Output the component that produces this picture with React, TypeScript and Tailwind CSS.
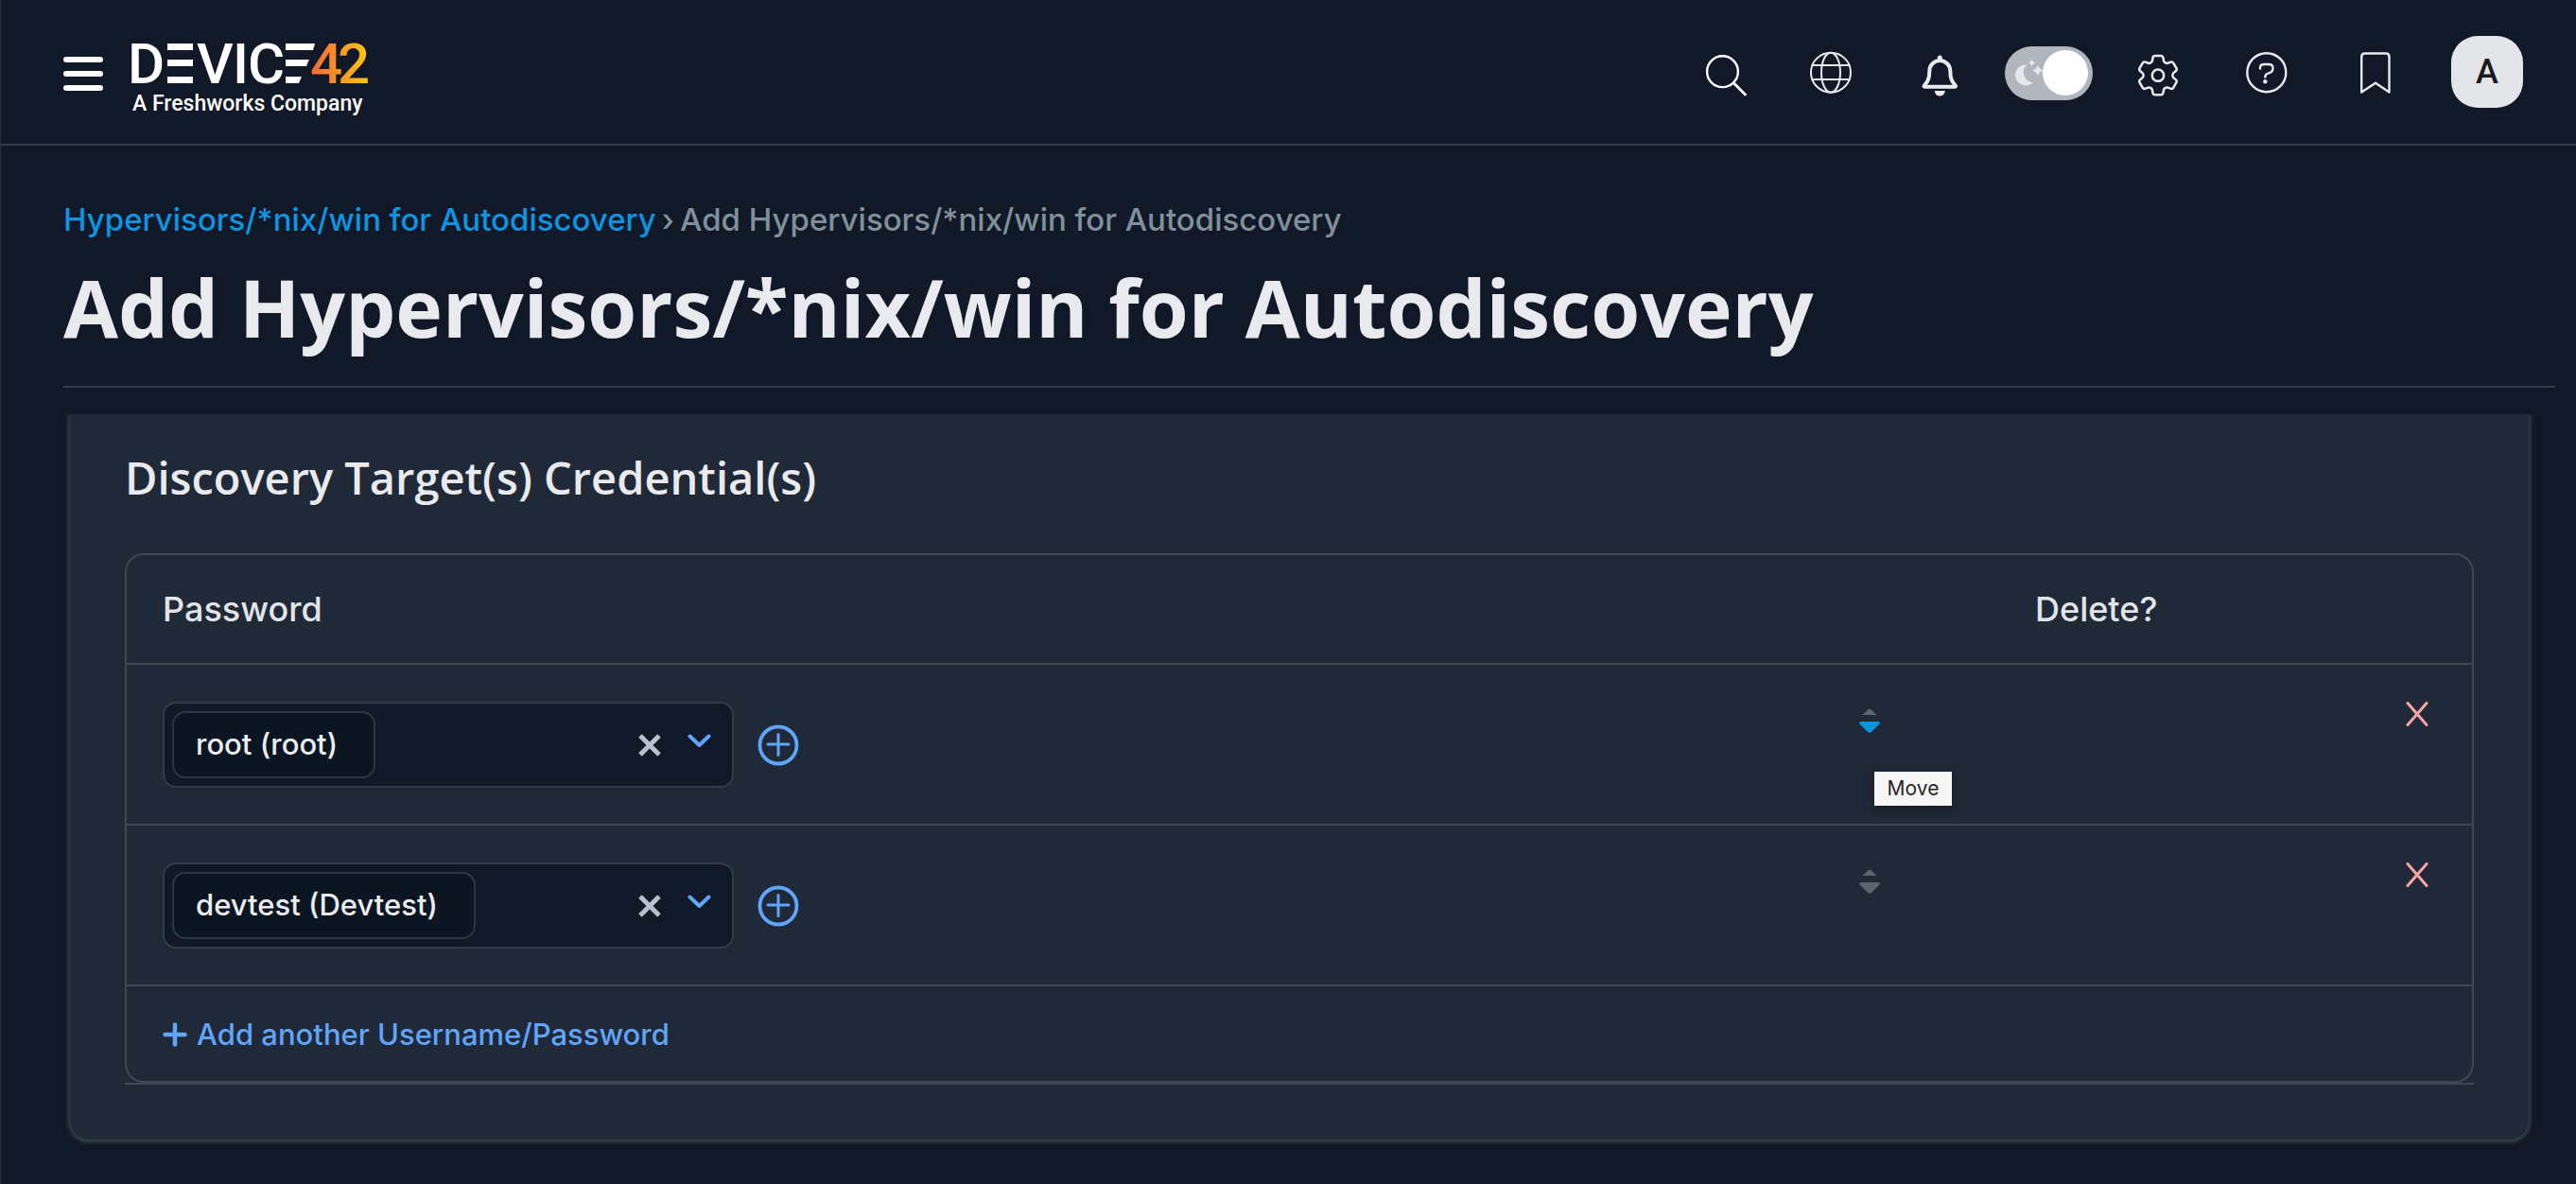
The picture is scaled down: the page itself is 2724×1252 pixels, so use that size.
import type { ReactNode } from "react";

type Credential = { id: string; label: string; moveActive: boolean };

const credentials: Credential[] = [
  { id: "root", label: "root (root)", moveActive: true },
  { id: "devtest", label: "devtest (Devtest)", moveActive: false },
];

const COG =
  "M9.594 3.94c.09-.542.56-.94 1.11-.94h2.593c.55 0 1.02.398 1.11.94l.213 1.281c.063.374.313.686.645.87.074.04.147.083.22.127.325.196.72.257 1.075.124l1.217-.456a1.125 1.125 0 0 1 1.37.49l1.296 2.247a1.125 1.125 0 0 1-.26 1.431l-1.003.827c-.293.241-.438.613-.43.992a7.723 7.723 0 0 1 0 .255c-.008.378.137.75.43.991l1.004.827c.424.35.534.955.26 1.43l-1.298 2.247a1.125 1.125 0 0 1-1.369.491l-1.217-.456c-.355-.133-.75-.072-1.076.124a6.47 6.47 0 0 1-.22.128c-.331.183-.581.495-.644.869l-.213 1.281c-.09.543-.56.94-1.11.94h-2.594c-.55 0-1.019-.398-1.11-.94l-.213-1.281c-.062-.374-.312-.686-.644-.87a6.52 6.52 0 0 1-.22-.127c-.325-.196-.72-.257-1.076-.124l-1.217.456a1.125 1.125 0 0 1-1.369-.49l-1.297-2.247a1.125 1.125 0 0 1 .26-1.431l1.004-.827c.292-.24.437-.613.43-.991a6.932 6.932 0 0 1 0-.255c.007-.38-.138-.751-.43-.992l-1.004-.827a1.125 1.125 0 0 1-.26-1.43l1.297-2.247a1.125 1.125 0 0 1 1.37-.491l1.216.456c.356.133.751.072 1.076-.124.072-.044.146-.086.22-.128.332-.183.582-.495.644-.869l.214-1.28Z";

function Logo() {
  return (
    <svg width="254" height="92" viewBox="0 0 254 92" className="overflow-visible" role="img" aria-label="Device42, A Freshworks Company">
      <defs>
        <linearGradient id="fortyTwo" gradientUnits="userSpaceOnUse" x1="192" y1="0" x2="252" y2="0">
          <stop offset="0" stopColor="#f26a35" />
          <stop offset="0.5" stopColor="#f9942a" />
          <stop offset="1" stopColor="#fdc60c" />
        </linearGradient>
      </defs>
      <g fill="#fff" className="font-[Roboto] text-[60px] font-medium">
        <text x="-2" y="58">D</text>
        <text x="71" y="58">V</text>
        <text x="109" y="58">I</text>
        <text x="125" y="58">C</text>
      </g>
      <g fill="#fff">
        <rect x="40" y="16" width="27" height="7" />
        <rect x="40" y="33" width="27" height="7" />
        <rect x="40" y="51" width="27" height="7" />
        <polygon points="165,16 196,16 194,23 165,23" />
        <polygon points="165,33 190,33 187,40 165,40" />
        <polygon points="165,51 182,51 179,58 165,58" />
      </g>
      <g fill="url(#fortyTwo)" className="font-[Roboto] text-[60px] font-medium">
        <text x="191" y="58">4</text>
        <text x="220" y="58">2</text>
      </g>
      <text x="3" y="87" fill="#fff" className="font-[Roboto] text-[23px] font-medium">
        A Freshworks Company
      </text>
    </svg>
  );
}

function IconButton({ label, stroke = "#e8eaed", children }: { label: string; stroke?: string; children: ReactNode }) {
  return (
    <button type="button" aria-label={label} className="flex w-[115px] justify-center">
      <svg width="52" height="52" viewBox="0 0 52 52" fill="none" stroke={stroke} strokeWidth="2.4" strokeLinecap="round" strokeLinejoin="round">
        {children}
      </svg>
    </button>
  );
}

function ThemeToggle() {
  return (
    <label className="flex w-[115px] cursor-pointer justify-center">
      <input type="checkbox" role="switch" defaultChecked aria-label="Dark mode" className="sr-only" />
      <svg width="94" height="60" viewBox="0 0 94 60" aria-hidden="true">
        <rect x="1" y="3" width="93" height="57" rx="28.5" fill="#b1b6bd" />
        <g fill="#e6e8eb">
          <path d="M24.500 22.500a11 11 0 1 0 6.500 18.500a10.500 10.500 0 0 1-6.500-18.500z" />
          <path d="M29.500 16.500q.7 3.300 4 4q-3.300.7-4 4q-.7-3.300-4-4q3.300-.7 4-4z" />
          <path d="M36 22.500q1 5 6 6q-5 1-6 6q-1-5-6-6q5-1 6-6z" />
        </g>
        <circle cx="65" cy="31" r="24" fill="#fff" />
      </svg>
    </label>
  );
}

function Header() {
  return (
    <header className="flex min-h-[154px] items-center justify-between border-b-2 border-[#363d4a] pr-14 pl-[66px]">
      <div className="flex items-center gap-7">
        <button type="button" aria-label="Open menu">
          <svg width="42" height="44" viewBox="0 0 42 44" fill="#fff">
            <rect y="6" width="42" height="6" rx="3" />
            <rect y="21" width="42" height="6" rx="3" />
            <rect y="36" width="42" height="6" rx="3" />
          </svg>
        </button>
        <a href="#home">
          <Logo />
        </a>
      </div>
      <div className="flex items-center">
        <IconButton label="Search" stroke="#fff">
          <circle cx="26.500" cy="25.700" r="16.400" />
          <path d="M38.500 38l12 12" strokeWidth="2.800" />
        </IconButton>
        <IconButton label="Language">
          <g strokeWidth="2">
            <circle cx="26" cy="26.700" r="21" />
            <ellipse cx="26" cy="26.700" rx="10" ry="21" />
            <path d="M6.400 19h39.200M6.400 34h39.200" />
          </g>
        </IconButton>
        <IconButton label="Notifications">
          <path
            strokeWidth="4"
            d="M26.300 14a11 11 0 0 0-11 11c0 8-1.500 11-5.500 15.500q-.8 1.200.6 1.200h31.800q1.400 0 .6-1.200c-4-4.500-5.500-7.500-5.500-15.500a11 11 0 0 0-11-11z"
          />
          <path strokeWidth="5" d="M26.300 11v2" />
          <path stroke="none" fill="#e8eaed" d="M20.800 46h11a5.500 5.500 0 0 1-11 0z" />
        </IconButton>
        <ThemeToggle />
        <IconButton label="Settings">
          <g transform="translate(-.5 2.200) scale(2.290)" strokeWidth="1.100">
            <path d={COG} />
            <circle cx="12" cy="12" r="2.700" />
          </g>
        </IconButton>
        <IconButton label="Help">
          <circle cx="26.800" cy="26.700" r="20.500" />
          <path d="M20 22.500v-1q0-3.500 4-3.500h5q4.500 0 4.500 4t-3.500 5l-2.500 1q-2.200 1-2.200 3.500" />
          <circle cx="25.300" cy="36.300" r="2.200" fill="#e8eaed" stroke="none" />
        </IconButton>
        <IconButton label="Bookmarks">
          <path d="M12.200 47.500V10q0-3.500 3.500-3.500h22.300q3.500 0 3.500 3.500v37.500L27 37.800z" />
        </IconButton>
        <button
          type="button"
          aria-label="Account A"
          className="ml-6 flex size-[76px] items-center justify-center rounded-[28px] bg-[#e4e5e9] font-[Roboto] text-4xl font-medium text-[#1b1b1b]"
        >
          A
        </button>
      </div>
    </header>
  );
}

function CredentialSelect({ id, label }: { id: string; label: string }) {
  return (
    <div className="flex items-center gap-[25px]">
      <div className="flex h-[91px] w-[604px] items-center rounded-[14px] border-2 border-[#333a48] bg-[#111827] pr-[22px] pl-2">
        <span className="flex h-[71px] items-center rounded-[14px] border-2 border-[#2d3743] bg-[#0c1623] pr-[38px] pl-[23px] text-[31px] font-medium whitespace-nowrap text-[#ebedf0]">
          {label}
        </span>
        <input id={id} type="text" role="combobox" aria-expanded="false" aria-label="Password" className="min-w-0 flex-1 bg-transparent outline-none" />
        <button type="button" aria-label={`Clear ${label}`}>
          <svg width="24" height="24" viewBox="0 0 24 24" stroke="#b8c2cc" strokeWidth="5">
            <path d="M2 2l20 20M22 2L2 22" />
          </svg>
        </button>
        <button type="button" aria-label="Show options" className="ml-7">
          <svg width="25" height="24" viewBox="0 0 25 24" fill="none" stroke="#60a5fa" strokeWidth="4" strokeLinecap="round" strokeLinejoin="round">
            <path d="M2.500 2.500l10 9.500l10-9.500" />
          </svg>
        </button>
      </div>
      <button type="button" aria-label="Add new password">
        <svg width="44" height="44" viewBox="0 0 44 44" fill="none" stroke="#60a5fa" strokeLinecap="round">
          <circle cx="22" cy="22" r="19.500" strokeWidth="3.800" />
          <path d="M22 10.500v22M11 21h22" strokeWidth="3" />
        </svg>
      </button>
    </div>
  );
}

function MoveControl({ active }: { active: boolean }) {
  return (
    <div className="relative mt-1.5 w-6">
      <button type="button" aria-label="Move" className="block">
        <svg width="24" height="28" viewBox="0 0 24 28">
          <path d="M11 1.500q.8 0 1.400.8l6.100 5.700h-15l6.100-5.700q.6-.8 1.400-.8z" fill="#5a6572" />
          <path
            d="M.500 15h21v2.500l-8.500 8.500q-2 1.500-4 0l-8.500-8.500z"
            fill={active ? "#0a95df" : "#5a6572"}
          />
        </svg>
      </button>
      {active && (
        <div
          role="tooltip"
          className="absolute top-[68px] left-4 flex h-9 w-[82px] items-center justify-center bg-[#f6f6f6] text-[21px] text-[#262626] shadow-[0_4px_14px_rgba(0,0,0,0.35)]"
        >
          Move
        </div>
      )}
    </div>
  );
}

function CredentialsTable() {
  return (
    <div className="border-b-2 border-[#404854]">
      <div className="rounded-[20px] border-2 border-[#404854]">
        <table className="w-full table-fixed border-separate border-spacing-0 text-left text-[#e2e5e7]">
          <colgroup>
            <col />
            <col className="w-[186px]" />
            <col className="w-[500px]" />
          </colgroup>
          <thead>
            <tr className="h-[114px] text-4xl">
              <th scope="col" className="pl-[38px] font-medium">Password</th>
              <td />
              <th scope="col" className="pl-[38px] font-medium">Delete?</th>
            </tr>
          </thead>
          <tbody>
            {credentials.map((c) => (
              <tr key={c.id} className="align-top">
                <td className="border-t-2 border-[#404854] pt-[39px] pb-[38px] pl-[38px]">
                  <CredentialSelect id={c.id} label={c.label} />
                </td>
                <td className="border-t-2 border-[#404854] pt-[39px] pl-[38px]">
                  <MoveControl active={c.moveActive} />
                </td>
                <td className="border-t-2 border-[#404854] pt-[39px] pr-[46px]">
                  <button type="button" aria-label={`Delete ${c.label}`} className="ml-auto block">
                    <svg width="24" height="26" viewBox="0 0 24 26" stroke="#fca5a5" strokeWidth="3" strokeLinecap="round">
                      <path d="M2 1.500l20 23M22 1.500L2 24.500" />
                    </svg>
                  </button>
                </td>
              </tr>
            ))}
          </tbody>
          <tfoot>
            <tr>
              <td colSpan={3} className="h-[102px] border-t-2 border-[#404854] pt-0.5 pl-[38px]">
                <a href="#add" className="flex items-center gap-2.5 text-[31px] font-medium text-[#60a5fa]">
                  <svg width="26" height="26" viewBox="0 0 26 26" stroke="#60a5fa" strokeWidth="4.500" strokeLinecap="round" aria-hidden="true">
                    <path d="M13 2.500v21M2.500 13h21" />
                  </svg>
                  Add another Username/Password
                </a>
              </td>
            </tr>
          </tfoot>
        </table>
      </div>
    </div>
  );
}

export default function App() {
  return (
    <div className="min-h-screen border-l border-[#2a303d] bg-[#111827] font-[Inter,sans-serif] text-[#e8eaee]">
      <Header />
      <main className="pt-[58px] pl-[66px]">
        <div className="mr-[22px] border-b-2 border-[#363d4a] pb-[31px]">
          <nav aria-label="Breadcrumb" className="flex gap-1.5 text-[33px] leading-10 font-medium whitespace-nowrap text-[#80919c]">
            <a href="#autodiscovery" className="text-[#0c95e0]">Hypervisors/*nix/win for Autodiscovery</a>
            <span aria-hidden="true">›</span>
            <span>Add Hypervisors/*nix/win for Autodiscovery</span>
          </nav>
          <h1 className="mt-[21px] font-['Open_Sans'] text-[84px] leading-[104px] font-bold whitespace-nowrap">
            Add Hypervisors/*nix/win for Autodiscovery
          </h1>
        </div>
        <div className="mt-7 overflow-hidden pr-[50px] pb-10 pl-[7px]">
          <section className="rounded-b-[20px] bg-[#202937] px-[58px] pt-[35px] pb-[58px] shadow-[0_1px_5px_1px_#4b525d]">
            <h2 className="mb-12 font-['Open_Sans'] text-[47px] leading-[64px] font-semibold">
              Discovery Target(s) Credential(s)
            </h2>
            <CredentialsTable />
          </section>
        </div>
      </main>
    </div>
  );
}
